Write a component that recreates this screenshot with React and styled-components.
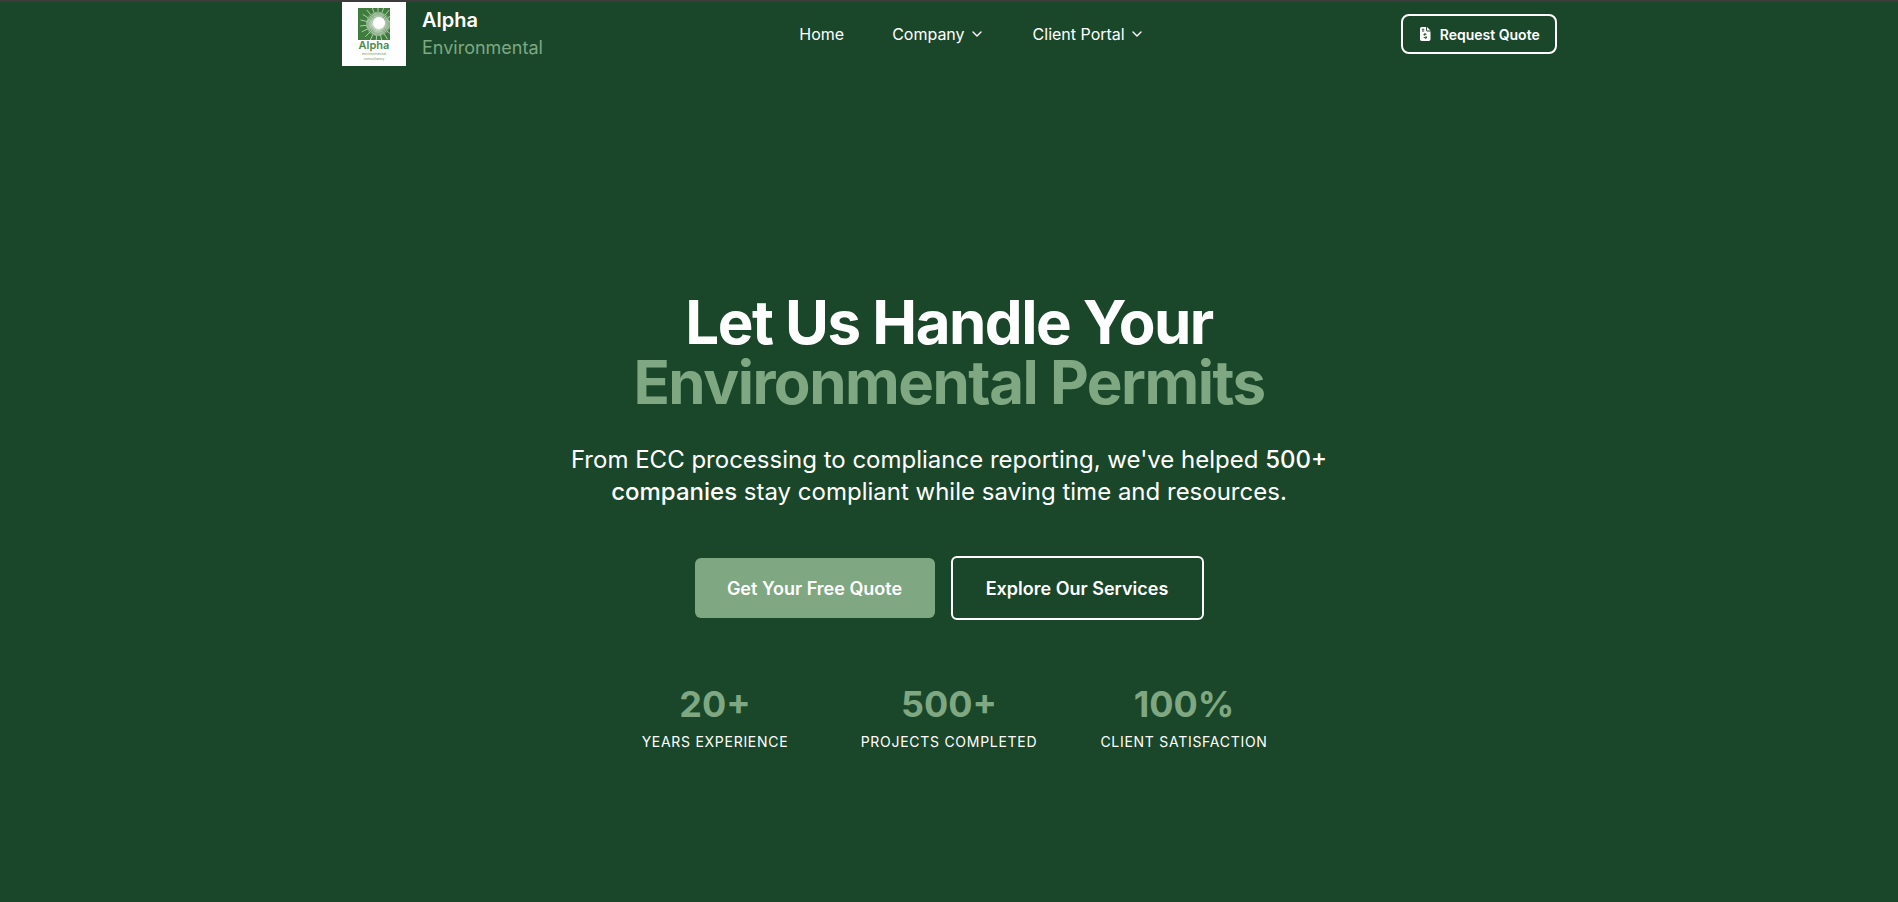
import React from "react";
import styled, { createGlobalStyle } from "styled-components";
import { ChevronDown } from "lucide-react";

const GlobalStyle = createGlobalStyle`
  html, body {
    margin: 0;
    padding: 0;
    background: #1a472a;
  }
  * {
    box-sizing: border-box;
  }
`;

const stats = [
  { value: "20+", label: "Years Experience" },
  { value: "500+", label: "Projects Completed" },
  { value: "100%", label: "Client Satisfaction" },
];

const rays = Array.from({ length: 56 }, (_, i) => (i * Math.PI * 2) / 56);

const LogoMark = () => (
  <svg width="64" height="64" viewBox="0 0 64 64">
    <rect x="16" y="6" width="32" height="32" fill="#3f7d3c" />
    <clipPath id="logo-square">
      <rect x="16" y="6" width="32" height="32" />
    </clipPath>
    <g clipPath="url(#logo-square)">
      {rays.map((a, i) => (
        <line
          key={i}
          x1="36"
          y1="22"
          x2={36 + Math.cos(a) * (i % 3 ? 12 : 18)}
          y2={22 + Math.sin(a) * (i % 3 ? 12 : 18)}
          stroke="#fff"
          strokeWidth="0.6"
        />
      ))}
      <circle cx="37" cy="21" r="6" fill="#fff" />
    </g>
    <text x="32" y="47" textAnchor="middle" fontFamily="Inter, sans-serif" fontSize="11" fontWeight="600" fill="#4b8a4a">
      Alpha
    </text>
    <text x="32" y="52.5" textAnchor="middle" fontFamily="Inter, sans-serif" fontSize="3.6" fill="#6f9c6c">
      environmental
    </text>
    <text x="32" y="57.5" textAnchor="middle" fontFamily="Inter, sans-serif" fontSize="3.6" fill="#6f9c6c">
      consultancy
    </text>
  </svg>
);

const FileIcon = () => (
  <svg width="10.5" height="14" viewBox="0 0 384 512" fill="#fff">
    <path d="M64 0C28.7 0 0 28.7 0 64v384c0 35.3 28.7 64 64 64h256c35.3 0 64-28.7 64-64V160H256c-17.7 0-32-14.3-32-32V0H64zm192 0v128h128L256 0zM64 80c0-8.8 7.2-16 16-16h64c8.8 0 16 7.2 16 16s-7.2 16-16 16H80c-8.800 0-16-7.200-16-16zm0 64c0-8.800 7.200-16 16-16h64c8.800 0 16 7.200 16 16s-7.200 16-16 16H80c-8.800 0-16-7.200-16-16zm128 72c8.800 0 16 7.200 16 16v17.300c8.500 1.200 16.700 3.100 24.100 5.100 8.500 2.300 13.600 11 11.300 19.600s-11 13.600-19.600 11.300c-11.100-3-22-5.200-32.100-5.300-8.400-.100-17.400 1.800-23.600 5.500-5.700 3.400-8.100 7.300-8.100 12.800 0 3.700 1.300 6.500 7.300 10.100 6.900 4.100 16.600 7.100 29.200 10.900l.500.100c11.300 3.400 25.300 7.600 36.300 14.600 12.100 7.600 22.400 19.700 22.600 38.200.200 19.300-9.700 33.300-22.900 41.600-7.600 4.800-16.100 7.800-24.800 9.300V424c0 8.800-7.200 16-16 16s-16-7.200-16-16v-17.800c-11.200-2.100-21.700-5.700-30.900-8.900-2.100-.700-4.200-1.400-6.200-2.100-8.400-2.800-12.900-11.900-10.100-20.200s11.900-12.900 20.200-10.100c2.500.800 4.800 1.600 7.100 2.400 13.600 4.600 24.600 8.400 36.300 8.700 9.100.300 17.900-1.700 23.700-5.300 5.100-3.200 7.900-7.300 7.800-14-.100-4.600-1.800-7.800-7.700-11.600-6.800-4.300-16.500-7.400-29-11.200l-1.600-.500c-11-3.300-24.300-7.300-34.800-13.700-12-7.200-22.600-18.900-22.700-37.300-.100-19.400 10.800-32.800 23.800-40.500 7.500-4.400 15.800-7.200 24.100-8.700V232c0-8.800 7.200-16 16-16z" />
  </svg>
);

export default function App() {
  return (
    <Page>
      <GlobalStyle />
      <TopEdge />
      <Header>
        <Brand>
          <LogoBox>
            <LogoMark />
          </LogoBox>
          <BrandText>
            <BrandName>Alpha</BrandName>
            <BrandSub>Environmental</BrandSub>
          </BrandText>
        </Brand>
        <Nav>
          <NavItem>Home</NavItem>
          <NavItem>
            Company <ChevronDown size={16} strokeWidth={2} />
          </NavItem>
          <NavItem>
            Client Portal <ChevronDown size={16} strokeWidth={2} />
          </NavItem>
        </Nav>
        <QuoteButton>
          <FileIcon />
          Request Quote
        </QuoteButton>
      </Header>
      <Hero>
        <Title>
          Let Us Handle Your
          <TitleAccent>Environmental Permits</TitleAccent>
        </Title>
        <Lead>
          From ECC processing to compliance reporting, we've helped <strong>500+ companies</strong> stay compliant while
          saving time and resources.
        </Lead>
        <Actions>
          <PrimaryButton>Get Your Free Quote</PrimaryButton>
          <OutlineButton>Explore Our Services</OutlineButton>
        </Actions>
        <Stats>
          {stats.map((s) => (
            <Stat key={s.label}>
              <StatValue>{s.value}</StatValue>
              <StatLabel>{s.label}</StatLabel>
            </Stat>
          ))}
        </Stats>
      </Hero>
    </Page>
  );
}

const Page = styled.div`
  height: 902px;
  overflow: hidden;
  background: #1a472a;
  color: #fff;
  font-family: Inter, "Liberation Sans", sans-serif;
`;

const TopEdge = styled.div`
  height: 2px;
  background: #3c3c3c;
`;

const Header = styled.header`
  width: 1216px;
  height: 64px;
  margin: 0 auto;
  padding-left: 1px;
  display: flex;
  align-items: center;
  justify-content: space-between;
`;

const Brand = styled.div`
  display: flex;
  align-items: center;
  gap: 16px;
  width: 201px;
`;

const LogoBox = styled.div`
  flex: none;
  width: 64px;
  height: 64px;
  background: #fff;
  display: flex;
`;

const BrandText = styled.div`
  display: flex;
  flex-direction: column;
  white-space: nowrap;
`;

const BrandName = styled.span`
  font-size: 20px;
  line-height: 28px;
  font-weight: 600;
`;

const BrandSub = styled.span`
  font-size: 18px;
  line-height: 28px;
  color: #7fa882;
`;

const Nav = styled.nav`
  display: flex;
  align-items: center;
  gap: 48px;
`;

const NavItem = styled.a`
  display: flex;
  align-items: center;
  gap: 4px;
  font-size: 16px;
  line-height: 24px;
  font-weight: 400;
  color: #fff;
`;

const QuoteButton = styled.button`
  width: 156px;
  height: 40px;
  padding: 0 0 0 2px;
  display: flex;
  align-items: center;
  justify-content: center;
  gap: 9px;
  background: transparent;
  border: 2px solid #fff;
  border-radius: 8px;
  color: #fff;
  font-family: inherit;
  font-size: 14px;
  font-weight: 600;
`;

const Hero = styled.main`
  display: flex;
  flex-direction: column;
  align-items: center;
  padding-top: 226px;
`;

const Title = styled.h1`
  margin: 0;
  font-size: 60px;
  line-height: 60px;
  font-weight: 700;
  letter-spacing: -1.5px;
  text-align: center;
`;

const TitleAccent = styled.span`
  display: block;
  color: #7fa882;
`;

const Lead = styled.p`
  margin: 32px 0 0;
  width: 768px;
  font-size: 24px;
  line-height: 32px;
  font-weight: 400;
  text-align: center;

  strong {
    font-weight: 500;
  }
`;

const Actions = styled.div`
  display: flex;
  align-items: center;
  gap: 16px;
  margin-top: 48px;
`;

const PrimaryButton = styled.button`
  width: 240px;
  height: 60px;
  background: #7fa882;
  border: none;
  border-radius: 6px;
  color: #fff;
  font-family: inherit;
  font-size: 18px;
  font-weight: 600;
`;

const OutlineButton = styled.button`
  width: 253px;
  height: 64px;
  background: transparent;
  border: 2px solid #fff;
  border-radius: 6px;
  color: #fff;
  font-family: inherit;
  font-size: 18px;
  font-weight: 600;
`;

const Stats = styled.div`
  display: grid;
  grid-template-columns: 202px 202px 204px;
  gap: 32px;
  padding-left: 2px;
  margin-top: 64px;
`;

const Stat = styled.div`
  display: flex;
  flex-direction: column;
  align-items: center;
`;

const StatValue = styled.div`
  font-size: 36px;
  line-height: 40px;
  font-weight: 700;
  color: #7fa882;
`;

const StatLabel = styled.div`
  margin-top: 8px;
  font-size: 14px;
  line-height: 20px;
  font-weight: 400;
  letter-spacing: 0.72px;
  text-transform: uppercase;
  white-space: nowrap;
`;
